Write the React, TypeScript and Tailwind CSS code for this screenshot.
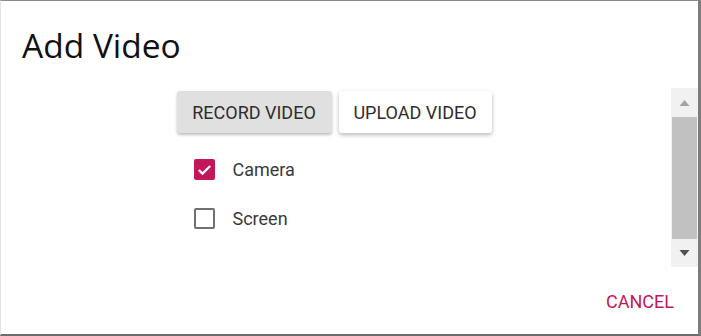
import React from 'react';

const Checkbox: React.FC<{ checked?: boolean; label: string }> = ({ checked, label }) => (
  <label className="flex items-center h-[49px] ml-[4px]">
    <span className="w-[48px] flex items-center justify-center">
      {checked ? (
        <span className="w-[21px] h-[21px] rounded-[2px] bg-[#c2185b] flex items-center justify-center">
          <svg viewBox="0 0 24 24" className="w-[21px] h-[21px]" fill="none" stroke="#fff" strokeWidth="2.6">
            <path d="M5.5 12.5l4.2 4.2L18.5 8" />
          </svg>
        </span>
      ) : (
        <span className="w-[21px] h-[21px] rounded-[2px] border-[2px] border-[#707070]" />
      )}
    </span>
    <span className="ml-[4px] text-[18px] text-[#3a3a3a]">{label}</span>
  </label>
);

export default function App() {
  return (
    <div
      className="w-[701px] h-[336px] bg-white border-t border-t-[#8a8a8a] border-l border-l-[#e4e4e4] border-r-[3px] border-r-[#7c7c7c] border-b-[2px] border-b-[#6d6d6d] flex flex-col"
      style={{ fontFamily: 'Roboto, "Liberation Sans", sans-serif' }}
    >
      <div className="h-[87px] shrink-0 pl-[21px] pt-[21px]">
        <h1
          className="text-[33.5px] leading-[46px] text-[#111]"
          style={{ fontFamily: '"Open Sans", "Noto Sans", sans-serif' }}
        >
          Add Video
        </h1>
      </div>

      <div className="h-[179px] shrink-0 flex">
        <div className="flex-1 flex justify-center pt-[3px] pr-[4px]">
          <div className="w-[315px]">
            <div className="flex gap-[7px]">
              <button className="h-[42px] w-[155px] rounded-[3px] bg-[#e0e0e0] text-[18px] text-[#2e2e2e] shadow-[0_2px_3px_rgba(0,0,0,0.25)]">
                RECORD VIDEO
              </button>
              <button className="h-[42px] w-[153px] rounded-[3px] bg-white text-[18px] text-[#2e2e2e] shadow-[0_2px_4px_rgba(0,0,0,0.28)]">
                UPLOAD VIDEO
              </button>
            </div>
            <div className="mt-[12px]">
              <Checkbox checked label="Camera" />
              <Checkbox label="Screen" />
            </div>
          </div>
        </div>
        <div className="w-[27px] bg-[#f1f1f1] flex flex-col">
          <div className="h-[29px] flex items-center justify-center">
            <svg viewBox="0 0 10 6" className="w-[11px] h-[6px]">
              <path d="M5 0L10 6H0z" fill="#a3a3a3" />
            </svg>
          </div>
          <div className="flex-1 mx-[1px] bg-[#c1c1c1]" />
          <div className="h-[28px] flex items-center justify-center">
            <svg viewBox="0 0 10 6" className="w-[11px] h-[6px]">
              <path d="M0 0H10L5 6z" fill="#505050" />
            </svg>
          </div>
        </div>
      </div>

      <div className="flex-1 flex items-center justify-end pr-[22px] pt-[1px]">
        <button className="text-[18px] text-[#c2185b] px-[2px]">CANCEL</button>
      </div>
    </div>
  );
}
